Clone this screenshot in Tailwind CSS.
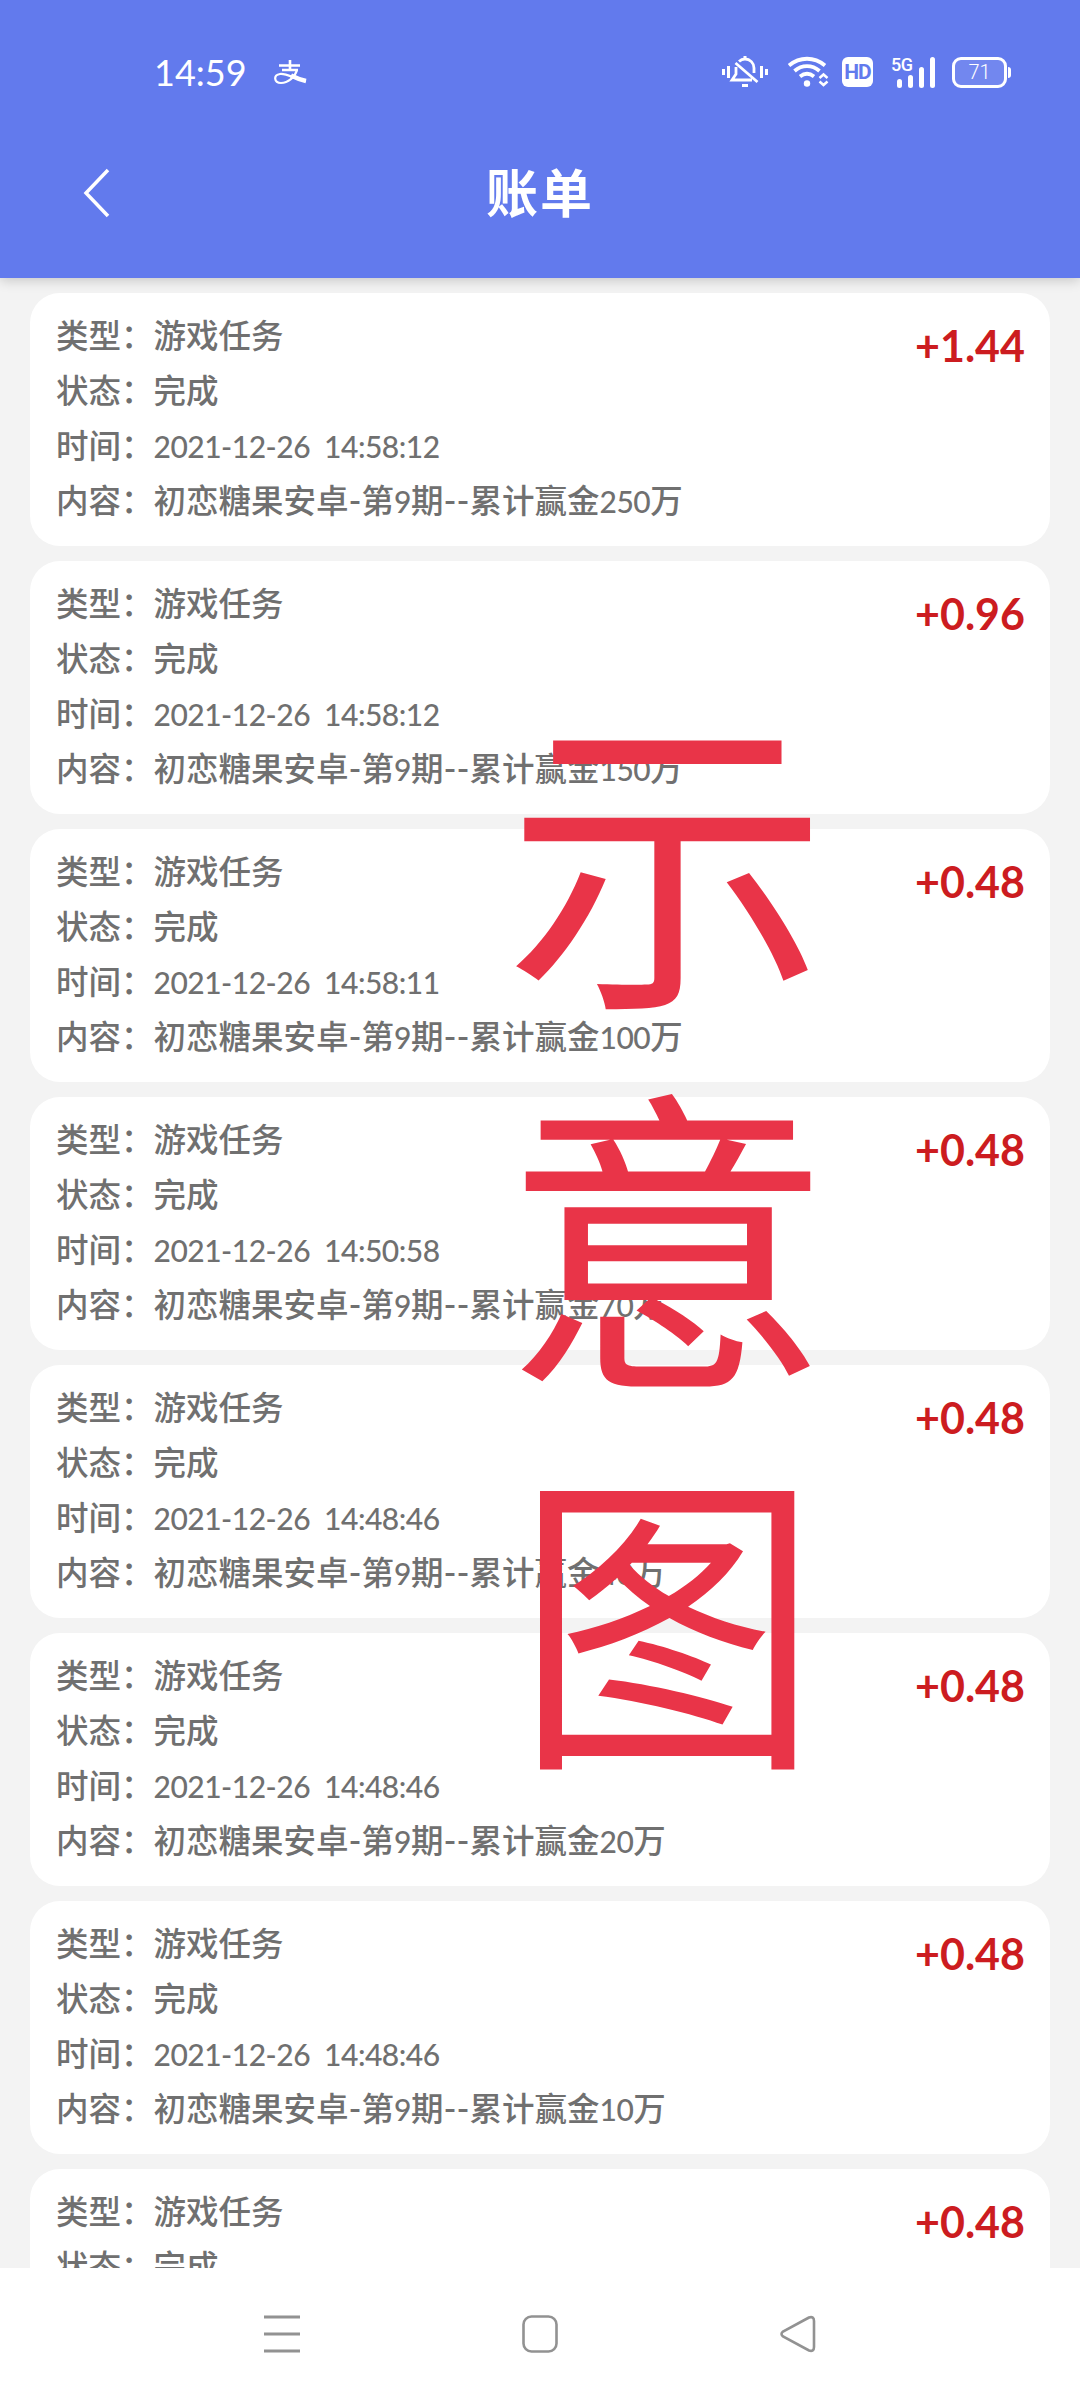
<!DOCTYPE html>
<html lang="zh-CN">
<head>
    <meta charset="UTF-8">
    <meta name="viewport" content="width=device-width, initial-scale=1.0">
    <title>账单</title>
    <script src="https://cdn.jsdelivr.net/npm/@tailwindcss/browser@4"></script>
</head>
<body class="relative flex flex-col w-[1080px] h-[2400px] overflow-hidden bg-[#f3f3f3] font-['Lato','Noto_Sans_CJK_SC',sans-serif]">
<!-- Header -->
<header class="relative z-10 h-[278px] shrink-0 bg-[#627aed] text-white shadow-[0_2px_12px_rgba(0,0,0,0.2)]">
    <div class="flex h-36 items-center pl-[154px] pr-[69px]">
        <span class="w-[93px] text-[36px] leading-none">14:59</span>
        <svg class="ml-[27px] mt-px" width="34" height="28" viewBox="0 0 34 28" fill="none" stroke="#fff">
            <path d="M5 6.5h21M16 1v10M8 11h16" stroke-width="2.6"/>
            <path d="M23 11C21 18 14 24 7 24c-7 0-8-8-1-9 7-1 16 6 26 7" stroke-width="2.2"/>
            <path d="M17 16.500c5 2.500 10 4.500 15 5.500" stroke-width="4.500"/>
        </svg>
        <div class="ml-auto flex items-center">
            <svg width="46" height="32" viewBox="0 0 46 32" fill="none" stroke="#fff" stroke-width="3">
                <path d="M1.500 13v6M6.500 10v12M44.500 13v6M39.500 10v12"/>
                <path d="M17 5.500C19 3.500 21 3 23 3c5 0 9 4 9 9v5M14 11v7l-4 6h20M13.500 7l22 19" stroke-width="2.800"/>
                <path d="M23 0v4M20 29.500h6"/>
            </svg>
            <svg class="ml-[19px]" width="42" height="32" viewBox="0 0 42 32" fill="none" stroke="#fff" stroke-width="3.800">
                <path d="M2 9.500C13 .5 27 .5 38 9.500M7.500 15c7.500-6.500 17.500-6.500 25 0M13 20.500c4.500-3.500 9.500-3.500 14 0"/>
                <circle cx="20" cy="27.500" r="3.200" fill="#fff" stroke="none"/>
                <path d="M32.500 22l4-3.500 4 3.500M32.500 25.500l4 3.500 4-3.500" stroke-width="2.500"/>
            </svg>
            <div class="ml-[13px] flex h-[30px] w-[31px] items-center justify-center rounded-[6px] bg-white font-['Roboto'] text-[21px] font-bold leading-none tracking-[-1px] text-[#627aed]">HD</div>
            <div class="relative ml-[18px] flex h-[31px] w-[44px] items-end justify-end gap-[6px]">
                <span class="absolute left-0 top-0 font-['Roboto'] text-[18px] font-medium leading-[16px] tracking-[-0.5px]">5G</span>
                <i class="h-[9px] w-[5px] rounded-sm bg-white"></i>
                <i class="h-[13px] w-[5px] rounded-sm bg-white"></i>
                <i class="h-[21px] w-[5px] rounded-sm bg-white"></i>
                <i class="h-[31px] w-[5px] rounded-sm bg-white"></i>
            </div>
            <div class="ml-[17px] flex h-[31px] w-[55px] items-center justify-center rounded-[9px] border-[3px] border-white bg-white/10 font-['Roboto'] text-[20px] font-light leading-none">71</div>
            <i class="ml-px h-[11px] w-[3px] rounded-r bg-white"></i>
        </div>
    </div>
    <div class="grid h-[98px] grid-cols-3 items-center">
        <svg class="ml-[82px]" width="30" height="50" viewBox="0 0 30 50" fill="none" stroke="#fff" stroke-width="3.500">
            <path d="M26 2L4 25l22 23"/>
        </svg>
        <h1 class="text-center text-[52px] font-bold leading-none tracking-[2px]">账单</h1>
    </div>
</header>

<!-- Bill list -->
<main id="bill-list" class="flex min-h-0 flex-1 flex-col gap-[15px] overflow-hidden px-[30px] pt-[15px]"></main>

<!-- Watermark -->
<div class="absolute left-[506px] top-[656px] z-20 flex w-[322px] flex-col text-center font-['Noto_Sans_CJK_SC'] text-[318px] leading-[380px] text-[#e93448]">
    <span class="scale-x-[1.02]">示</span>
    <span class="scale-x-[1.04]">意</span>
    <span class="scale-x-[0.96]">图</span>
</div>

<!-- System navigation -->
<nav class="flex h-[132px] shrink-0 items-center bg-white text-[#929292]">
    <svg class="ml-[264px]" width="36" height="38" viewBox="0 0 36 38" fill="none" stroke="currentColor" stroke-width="3">
        <path d="M0 2h36M0 19h36M0 36h36"/>
    </svg>
    <svg class="ml-[222px]" width="36" height="38" viewBox="0 0 36 38" fill="none" stroke="currentColor" stroke-width="2.600">
        <rect x="1.500" y="1.500" width="33" height="35" rx="8"/>
    </svg>
    <svg class="ml-[222px]" width="36" height="38" viewBox="0 0 36 38" fill="none" stroke="currentColor" stroke-width="2.600">
        <path d="M29 2.500L3 16.500Q0 19 3 21.500L29 35.500Q34 37 34 32V6Q34 1 29 2.500Z"/>
    </svg>
</nav>
</body>
<script>
    const bills = [
        {amount: '+1.44', time: '2021-12-26 14:58:12', goal: 250},
        {amount: '+0.96', time: '2021-12-26 14:58:12', goal: 150},
        {amount: '+0.48', time: '2021-12-26 14:58:11', goal: 100},
        {amount: '+0.48', time: '2021-12-26 14:50:58', goal: 70},
        {amount: '+0.48', time: '2021-12-26 14:48:46', goal: 40},
        {amount: '+0.48', time: '2021-12-26 14:48:46', goal: 20},
        {amount: '+0.48', time: '2021-12-26 14:48:46', goal: 10},
        {amount: '+0.48', time: '2021-12-26 14:48:46', goal: 10}
    ];

    // Latin runs are set a little smaller than the Chinese text
    function latin(text) {
        return `<span class="text-[30px] leading-none tracking-[-0.5px] [word-spacing:7px]">${text}</span>`;
    }

    function dash(text) {
        return `<span class="text-[35px] leading-none">${text}</span>`;
    }

    document.getElementById('bill-list').innerHTML = bills.map(bill => `
        <section class="flex h-[253px] shrink-0 justify-between rounded-[30px] bg-white pl-[26px] pr-[25px] pt-[15px]">
            <div class="text-[32.500px] font-medium leading-[55px] text-[#707070] whitespace-nowrap">
                <p>类型：游戏任务</p>
                <p>状态：完成</p>
                <p>时间：${latin(bill.time)}</p>
                <p>内容：初恋糖果安卓${dash('-')}第${latin('9')}期${dash('--')}累计赢金${latin(bill.goal)}万</p>
            </div>
            <div class="mt-[14px] text-[43px] font-bold leading-[48px] text-[#cc1c20]">${bill.amount}</div>
        </section>`).join('');
</script>
</html>
